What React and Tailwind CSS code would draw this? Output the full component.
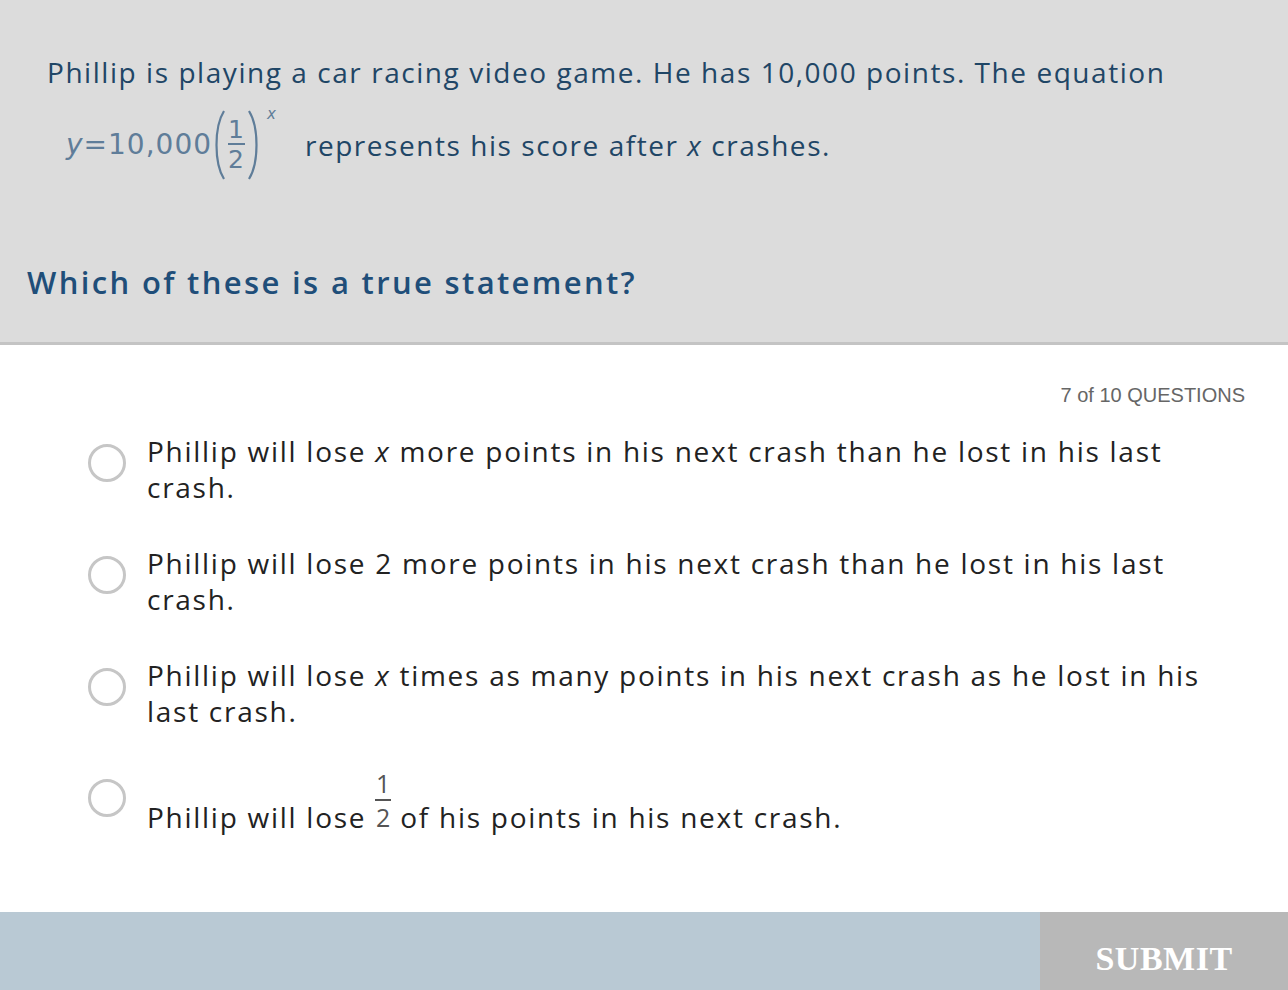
import React from "react";

const sans = { fontFamily: '"Open Sans", "Noto Sans", sans-serif' };

function Radio() {
  return <div className="w-[38px] h-[38px] rounded-full border-[3px] border-[#c6c6c6] bg-white shrink-0" />;
}

function Paren({ flip = false }) {
  return (
    <svg width="15" height="72" viewBox="0 0 15 72" className="shrink-0">
      <path
        d={flip ? "M3 2 C 13 18, 13 54, 3 70" : "M12 2 C 2 18, 2 54, 12 70"}
        fill="none"
        stroke="#5f7d99"
        strokeWidth="2.2"
      />
    </svg>
  );
}

export default function App() {
  return (
    <div className="w-[1288px] h-[990px] bg-white flex flex-col overflow-hidden" style={sans}>
      <div className="bg-[#dcdcdc] h-[342px] border-b-[3px] border-[#c4c4c4] box-content">
        <p className="pl-[47px] pt-[52px] text-[28px] leading-[40px] text-[#1f4666] tracking-[1.55px] whitespace-nowrap">
          Phillip is playing a car racing video game. He has 10,000 points. The equation
        </p>
        <div className="pl-[66px] mt-[19px] flex items-center h-[68px] text-[28px] tracking-[1.55px] text-[#1f4666]">
          <span className="flex items-center text-[#5f7d99] text-[28px] tracking-[1px]" style={{ fontFamily: '"DejaVu Sans", sans-serif' }}>
            <span className="italic">y</span>
            <span>=10,000</span>
            <Paren />
            <span className="inline-flex flex-col items-center leading-none mx-[1px]">
              <span className="text-[25px] leading-[27px]">1</span>
              <span className="block w-[17px] h-[2px] bg-[#5f7d99]" />
              <span className="text-[25px] leading-[29px]">2</span>
            </span>
            <Paren flip />
            <span className="italic text-[15px] self-start -mt-[6px] ml-[6px]">x</span>
          </span>
          <span className="ml-[28px]">represents his score after <i>x</i> crashes.</span>
        </div>
        <h2 className="pl-[27px] mt-[83px] text-[31px] font-semibold text-[#1f4e79] tracking-[2.35px] leading-[40px]">
          Which of these is a true statement?
        </h2>
      </div>

      <div className="flex-1 flex flex-col">
        <div className="flex justify-end pr-[43px] pt-[38px] text-[20px] leading-[24px] text-[#666666]" style={{ fontFamily: '"Liberation Sans", Arial, sans-serif' }}>
          7 of 10 QUESTIONS
        </div>
        <div className="flex flex-col gap-[40px] pl-[88px] pr-[50px] mt-[26px] text-[28px] leading-[36px] tracking-[1.73px] text-[#222222]">
          <div className="flex gap-[21px]">
            <div className="pt-[11px]"><Radio /></div>
            <p>Phillip will lose <i>x</i> more points in his next crash than he lost in his last crash.</p>
          </div>
          <div className="flex gap-[21px]">
            <div className="pt-[11px]"><Radio /></div>
            <p>Phillip will lose 2 more points in his next crash than he lost in his last crash.</p>
          </div>
          <div className="flex gap-[21px]">
            <div className="pt-[11px]"><Radio /></div>
            <p>Phillip will lose <i>x</i> times as many points in his next crash as he lost in his last crash.</p>
          </div>
          <div className="flex gap-[21px]">
            <div className="pt-[10px]"><Radio /></div>
            <div className="flex items-end">
              <span>Phillip will lose&nbsp;</span>
              <span className="inline-flex flex-col items-center text-[#555] tracking-normal mb-[3px]">
                <span className="text-[25px] leading-[28px]">1</span>
                <span className="block w-[16px] h-[2px] bg-[#555] my-[2px]" />
                <span className="text-[25px] leading-[29px]">2</span>
              </span>
              <span>&nbsp;of his points in his next crash.</span>
            </div>
          </div>
        </div>
        <div className="mt-auto h-[78px] bg-[#b9c9d4] flex justify-end">
          <div className="w-[248px] bg-[#b8b8b8] flex items-center justify-center text-white text-[34px] font-bold tracking-[0.5px] pt-[14px]" style={{ fontFamily: '"Liberation Serif", "Times New Roman", serif' }}>
            SUBMIT
          </div>
        </div>
      </div>
    </div>
  );
}
